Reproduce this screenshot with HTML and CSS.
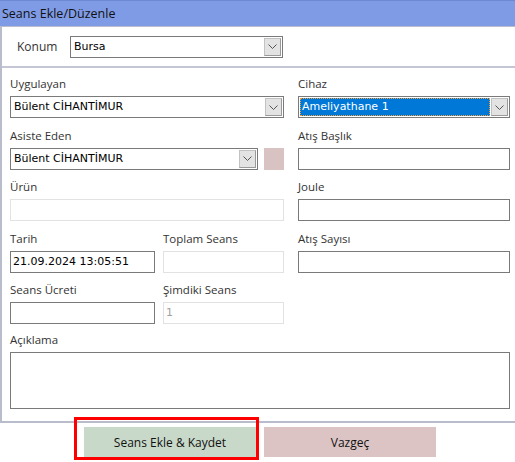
FILE: index.html
```html
<!DOCTYPE html>
<html lang="tr">

<head>
    <meta charset="UTF-8">
    <title>Seans Ekle/Düzenle</title>
    <link rel="stylesheet" href="styles.css">
</head>

<body>
    <div class="window">
        <div class="title-bar">Seans Ekle/Düzenle</div>

        <div class="frame">
            <div class="konum-row">
                <span class="konum-label">Konum</span>
                <div class="select konum-select">
                    <span class="select-value">Bursa</span>
                    <span class="select-arrow"><svg width="9" height="5" viewBox="0 0 9 5"><path d="M0.5 0.5 L4.5 4.5 L8.5 0.5" fill="none" stroke="#555" stroke-width="1"/></svg></span>
                </div>
            </div>

            <div class="form">
                <div class="col">
                    <div class="field">
                        <label>Uygulayan</label>
                        <div class="select">
                            <span class="select-value">Bülent CİHANTİMUR</span>
                            <span class="select-arrow"><svg width="9" height="5" viewBox="0 0 9 5"><path d="M0.5 0.5 L4.5 4.5 L8.5 0.5" fill="none" stroke="#555" stroke-width="1"/></svg></span>
                        </div>
                    </div>
                    <div class="field">
                        <label>Asiste Eden</label>
                        <div class="asiste-row">
                            <div class="select asiste-select">
                                <span class="select-value">Bülent CİHANTİMUR</span>
                                <span class="select-arrow"><svg width="9" height="5" viewBox="0 0 9 5"><path d="M0.5 0.5 L4.5 4.5 L8.5 0.5" fill="none" stroke="#555" stroke-width="1"/></svg></span>
                            </div>
                            <span class="swatch"></span>
                        </div>
                    </div>
                    <div class="field">
                        <label>Ürün</label>
                        <div class="input disabled"></div>
                    </div>
                    <div class="pair">
                        <div class="field">
                            <label>Tarih</label>
                            <div class="input">21.09.2024 13:05:51</div>
                        </div>
                        <div class="field">
                            <label>Toplam Seans</label>
                            <div class="input disabled"></div>
                        </div>
                        <div class="field">
                            <label>Seans Ücreti</label>
                            <div class="input"></div>
                        </div>
                        <div class="field">
                            <label>Şimdiki Seans</label>
                            <div class="input disabled">1</div>
                        </div>
                    </div>
                </div>

                <div class="col">
                    <div class="field">
                        <label>Cihaz</label>
                        <div class="select">
                            <span class="select-value selected">Ameliyathane 1</span>
                            <span class="select-arrow"><svg width="9" height="5" viewBox="0 0 9 5"><path d="M0.5 0.5 L4.5 4.5 L8.5 0.5" fill="none" stroke="#555" stroke-width="1"/></svg></span>
                        </div>
                    </div>
                    <div class="field">
                        <label>Atış Başlık</label>
                        <div class="input"></div>
                    </div>
                    <div class="field">
                        <label>Joule</label>
                        <div class="input"></div>
                    </div>
                    <div class="field">
                        <label>Atış Sayısı</label>
                        <div class="input"></div>
                    </div>
                </div>

                <div class="field wide">
                    <label>Açıklama</label>
                    <div class="input textarea"></div>
                </div>
            </div>
        </div>

        <div class="buttons">
            <span class="highlight"><button class="btn btn-save">Seans Ekle &amp; Kaydet</button></span>
            <button class="btn btn-cancel">Vazgeç</button>
        </div>
    </div>
</body>

</html>
```

FILE: styles.css
```css
body {
    margin: 0;
    padding: 0;
    background-color: #fff;
    font-family: "Open Sans", "DejaVu Sans", sans-serif;
    color: #222;
}

.window {
    width: 515px;
    height: 462px;
    overflow: hidden;
}

.title-bar {
    height: 25px;
    line-height: 25px;
    padding-left: 2px;
    background-color: #7f9be6;
    border-top: 1px solid #6d87d4;
    border-bottom: 1px solid #b9bccb;
    font-size: 12.5px;
    color: #111;
}

.frame {
    border-left: 2px solid #b9bccb;
    border-bottom: 2px solid #b9bccb;
}

.konum-row {
    display: flex;
    align-items: center;
    height: 39px;
    padding-left: 15px;
    border-bottom: 2px solid #c4c6d3;
}

.konum-label {
    width: 53px;
    font-size: 12px;
    color: #333;
}

.konum-select {
    width: 213px;
}

/* ana form: iki kolon + alt satirda aciklama */
.form {
    display: grid;
    grid-template-columns: 274px 212px;
    column-gap: 14px;
    row-gap: 8px;
    padding: 8px 0 12px 8px;
}

.col {
    display: flex;
    flex-direction: column;
    gap: 9.5px;
}

.wide {
    grid-column: 1 / 3;
}

.field label {
    display: block;
    height: 16px;
    line-height: 16px;
    margin-bottom: 4px;
    font-size: 11.5px;
    color: #333;
}

.pair {
    display: grid;
    grid-template-columns: 145px 121px;
    column-gap: 8px;
    row-gap: 9.5px;
}

.input,
.select {
    box-sizing: border-box;
    height: 22px;
    border: 1px solid #7a7a7a;
    background-color: #fff;
    font-family: "DejaVu Sans", sans-serif;
    font-size: 11px;
    line-height: 20px;
    padding-left: 2px;
    color: #000;
}

.input.disabled {
    border-color: #e2e2e2;
    color: #a0a0a0;
}

.textarea {
    height: 57px;
}

.select {
    display: flex;
    align-items: center;
    padding: 1px;
}

.select-value {
    flex: 1;
    height: 18px;
    line-height: 18px;
    padding-left: 2px;
}

.select-value.selected {
    background-color: #0078d7;
    color: #fff;
    outline: 1px dotted #f39c3a;
    outline-offset: -1px;
    margin-right: 1px;
}

.select-arrow {
    box-sizing: border-box;
    width: 17px;
    height: 18px;
    display: flex;
    align-items: center;
    justify-content: center;
    background-color: #e3e3e3;
    border: 1px solid #c2c2c2;
    border-right-color: #9a9a9a;
    border-bottom-color: #9a9a9a;
}

.asiste-row {
    display: flex;
    gap: 6px;
}

.asiste-select {
    width: 248px;
}

.swatch {
    width: 20px;
    height: 22px;
    background-color: #d9c2c2;
}

.buttons {
    display: flex;
    align-items: flex-start;
    gap: 5px;
    padding-left: 74px;
}

/* kirmizi vurgu kutusu */
.highlight {
    margin-top: -6px;
    padding: 7px 0 0 7px;
    border: 3px solid #ff0000;
    display: flex;
}

.btn {
    width: 172px;
    height: 30px;
    border: none;
    font-family: "Open Sans", "DejaVu Sans", sans-serif;
    font-size: 12px;
    color: #111;
    cursor: pointer;
}

.btn-save {
    background-color: #c9d9c9;
}

.btn-cancel {
    margin-top: 4px;
    background-color: #dcc4c4;
}
```
